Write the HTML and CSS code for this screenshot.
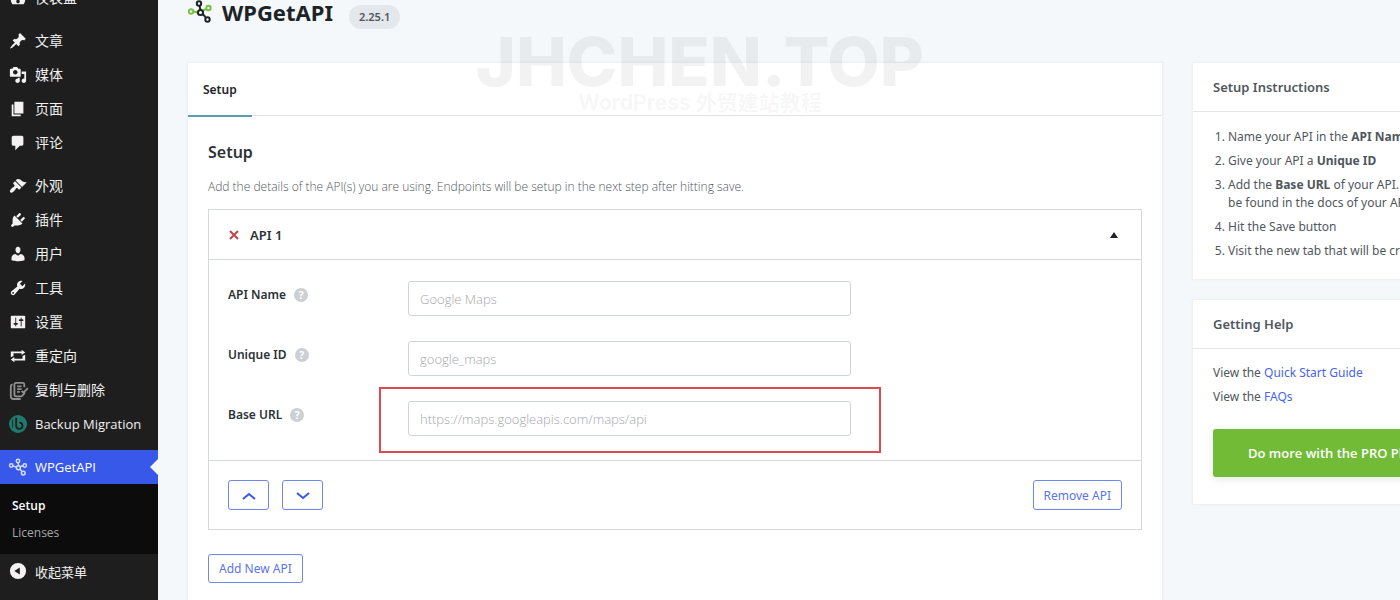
FILE: index.html
```html
<!DOCTYPE html>
<html lang="zh-CN">
<head>
    <meta charset="UTF-8">
    <meta name="viewport" content="width=device-width, initial-scale=1.0">
    <title>WPGetAPI</title>
    <link rel="stylesheet" href="styles.css">
</head>
<body>
    <div class="layout">
        <nav class="menu">
            <a class="menu-item" href="#">
                <svg class="menu-icon" viewBox="0 0 20 20"><path fill-rule="evenodd" d="M3.76 17h12.48A8 8 0 1 0 3.760 17zM10 12a2 2 0 1 1 0 4 2 2 0 0 1 0-4z"/></svg>
                <span>仪表盘</span>
            </a>
            <a class="menu-item group-start" href="#">
                <svg class="menu-icon" viewBox="0 0 20 20"><path d="M10.44 3.02l1.82-1.82 6.36 6.35-1.83 1.82c-1.05-.68-2.48-.57-3.41.36l-.75.75c-.92.93-1.04 2.35-.35 3.41l-1.83 1.82-2.41-2.41-2.8 2.79c-.42.42-3.38 2.71-3.8 2.29s1.86-3.39 2.28-3.81l2.79-2.79L4.1 9.36l1.83-1.82c1.05.69 2.48.57 3.4-.36l.75-.75c.93-.92 1.05-2.35.36-3.41z"/></svg>
                <span>文章</span>
            </a>
            <a class="menu-item" href="#">
                <svg class="menu-icon" viewBox="0 0 20 20"><path fill-rule="evenodd" d="M13 11V4c0-.55-.45-1-1-1h-1.67L9 1H5L3.67 3H2c-.55 0-1 .45-1 1v7c0 .55.45 1 1 1h10c.55 0 1-.45 1-1zM7 4.500c1.380 0 2.500 1.120 2.500 2.500S8.380 9.500 7 9.500 4.500 8.380 4.500 7 5.620 4.500 7 4.500zM14 6h5v10.500c0 1.380-1.120 2.500-2.500 2.500S14 17.880 14 16.500s1.120-2.500 2.500-2.500c.17 0 .34.02.5.05V9h-3V6zm-4 8.050V13h2v3.500c0 1.380-1.120 2.500-2.500 2.500S7 17.880 7 16.500 8.120 14 9.500 14c.17 0 .34.02.5.05z"/></svg>
                <span>媒体</span>
            </a>
            <a class="menu-item" href="#">
                <svg class="menu-icon" viewBox="0 0 20 20"><path d="M6 15V2h10v13H6zm-1 1h8v2H3V5h2v11z"/></svg>
                <span>页面</span>
            </a>
            <a class="menu-item" href="#">
                <svg class="menu-icon" viewBox="0 0 20 20"><path d="M5 2h9c1.100 0 2 .9 2 2v7c0 1.100-.9 2-2 2h-2l-5 5v-5H5c-1.100 0-2-.9-2-2V4c0-1.100.9-2 2-2z"/></svg>
                <span>评论</span>
            </a>
            <a class="menu-item group-start" href="#">
                <svg class="menu-icon" viewBox="0 0 20 20"><path d="M14.48 11.06L7.41 3.99l1.5-1.5c.5-.56 2.3-.47 3.51.32 1.21.8 1.43 1.28 2.91 2.1 1.18.64 2.45 1.26 4.45.85zm-.71.71L6.7 4.7 4.93 6.47c-.39.39-.39 1.02 0 1.41l1.06 1.06c.39.39.39 1.03 0 1.42-.6.6-1.43 1.11-2.21 1.69-.35.26-.7.53-1.01.84C1.43 14.23.4 16.08 1.4 17.07c.99 1 2.84-.03 4.18-1.36.31-.31.58-.66.85-1.02.57-.78 1.08-1.61 1.69-2.21.39-.39 1.02-.39 1.41 0l1.06 1.06c.39.39 1.02.39 1.41 0z"/></svg>
                <span>外观</span>
            </a>
            <a class="menu-item" href="#">
                <svg class="menu-icon" viewBox="0 0 20 20"><path d="M13.11 4.36L9.87 7.6 8 5.73l3.24-3.24c.35-.34 1.05-.2 1.56.32.52.51.66 1.21.31 1.55zm-8 1.77l.91-1.12 9.01 9.01-1.19.84c-.71.71-2.63 1.16-3.82 1.16H6.14L4.9 17.26c-.59.59-1.54.59-2.12 0-.59-.58-.59-1.53 0-2.12l1.24-1.24v-3.88c0-1.13.4-3.19 1.09-3.89zm7.26 3.97l3.24-3.24c.34-.35 1.04-.21 1.55.31.52.51.66 1.21.31 1.55l-3.24 3.25z"/></svg>
                <span>插件</span>
            </a>
            <a class="menu-item" href="#">
                <svg class="menu-icon" viewBox="0 0 20 20"><path d="M10 9.25c-2.27 0-2.73-3.44-2.73-3.44C7 4.02 7.82 2 9.97 2c2.16 0 2.98 2.02 2.71 3.81 0 0-.41 3.44-2.68 3.44zm0 2.57L12.72 10c2.39 0 4.52 2.33 4.52 4.53v2.49s-3.65 1.13-7.24 1.13c-3.65 0-7.24-1.13-7.24-1.13v-2.49c0-2.25 1.94-4.48 4.47-4.48z"/></svg>
                <span>用户</span>
            </a>
            <a class="menu-item" href="#">
                <svg class="menu-icon" viewBox="0 0 20 20"><path fill-rule="evenodd" d="M16.68 9.77c-1.34 1.34-3.3 1.67-4.95.99l-5.41 6.52c-.99.99-2.59.99-3.58 0s-.99-2.59 0-3.57l6.52-5.42c-.68-1.65-.35-3.61.99-4.95 1.28-1.28 3.12-1.62 4.72-1.06l-2.89 2.89 2.82 2.82 2.86-2.87c.53 1.58.18 3.39-1.08 4.65zM3.81 16.21c.4.39 1.04.39 1.43 0 .4-.4.4-1.04 0-1.43-.39-.4-1.03-.4-1.43 0-.39.39-.39 1.03 0 1.43z"/></svg>
                <span>工具</span>
            </a>
            <a class="menu-item" href="#">
                <svg class="menu-icon" viewBox="0 0 20 20"><path fill-rule="evenodd" d="M18 16V4c0-.55-.45-1-1-1H3c-.55 0-1 .45-1 1v12c0 .55.45 1 1 1h14c.55 0 1-.45 1-1zM8 11h1c.55 0 1 .45 1 1s-.45 1-1 1H8v1.5c0 .28-.22.5-.5.5s-.5-.22-.5-.5V13H6c-.55 0-1-.45-1-1s.45-1 1-1h1V5.5c0-.28.22-.5.5-.5s.5.22.5.5V11zm5-2h-1c-.55 0-1-.45-1-1s.45-1 1-1h1V5.5c0-.28.22-.5.5-.5s.5.22.5.5V7h1c.55 0 1 .45 1 1s-.45 1-1 1h-1v5.5c0 .28-.22.5-.5.5s-.5-.22-.5-.5V9z"/></svg>
                <span>设置</span>
            </a>
            <a class="menu-item" href="#">
                <svg class="menu-icon" viewBox="0 0 20 20"><path d="M5 7v3l-3 1.500V5h12V3l4 3.010L14 9V7H5zm10 6v-3l3-1.500V15H6v2l-4-3.010L6 11v2h9z"/></svg>
                <span>重定向</span>
            </a>
            <a class="menu-item" href="#">
                <svg class="menu-icon icon-copy" viewBox="0 0 20 20">
                    <path d="M17 12v2l-3 3H8a2 2 0 0 1-2-2V4a2 2 0 0 1 2-2h7a2 2 0 0 1 2 2v3"/>
                    <path d="M4 4a2 2 0 0 0-2 2v11a3 3 0 0 0 3 3h8M9 6h5M9 9h5M9 12h3M14 11l2 2 5-5"/>
                </svg>
                <span>复制与删除</span>
            </a>
            <a class="menu-item menu-latin" href="#">
                <svg class="menu-icon" viewBox="0 0 20 20">
                    <circle cx="10" cy="10" r="10" fill="#1f7a6c"/>
                    <path d="M8 3v9a3.500 3.500 0 1 0 3.500-3.500" fill="none" stroke="#1e1e1e" stroke-width="2"/>
                    <path d="M4 5v9" fill="none" stroke="#1e1e1e"/>
                </svg>
                <span>Backup Migration</span>
            </a>
            <a class="menu-item menu-latin group-start current" href="#">
                <svg class="menu-icon icon-nodes" viewBox="0 0 24 24">
                    <path d="M12 6.500l1 4M5.500 10.500l5 2M18.500 10l-4 2M14.500 15l3 3"/>
                    <circle cx="12" cy="4" r="2.300"/><circle cx="3" cy="10" r="2.300"/><circle cx="21" cy="10" r="2.300"/><circle cx="12.500" cy="13" r="2.600"/><circle cx="19" cy="20" r="2.500"/>
                </svg>
                <span>WPGetAPI</span>
            </a>
            <div class="submenu">
                <a class="active" href="#">Setup</a>
                <a href="#">Licenses</a>
            </div>
            <button class="menu-item collapse" type="button">
                <svg class="menu-icon" viewBox="0 0 20 20"><path fill-rule="evenodd" d="M10 1a9 9 0 1 1 0 18 9 9 0 0 1 0-18zM6 10l6-4v8z"/></svg>
                <span>收起菜单</span>
            </button>
        </nav>

        <main class="page">
            <header class="page-header">
                <svg class="logo" viewBox="0 0 24 24">
                    <g stroke="#7ac143"><path d="M5 11.500l5 1M18 9l-4 2"/><circle cx="3" cy="11.500" r="2.200"/><circle cx="20.500" cy="8" r="2.200"/></g>
                    <g stroke="#1d2327"><path d="M11.500 6l1 4M14.500 14l3 3"/><circle cx="11" cy="3.500" r="2.200"/><circle cx="12.500" cy="12.500" r="2.600"/><circle cx="19.500" cy="19.500" r="2.200"/></g>
                </svg>
                <h1>WPGetAPI</h1>
                <span class="version">2.25.1</span>
            </header>

            <div class="columns">
                <section class="card">
                    <div class="tabs">
                        <a class="tab" href="#">Setup</a>
                    </div>
                    <form class="form">
                        <h2>Setup</h2>
                        <p class="description">Add the details of the API(s) you are using. Endpoints will be setup in the next step after hitting save.</p>

                        <div class="group">
                            <div class="group-header">
                                <button class="remove-icon" type="button" aria-label="Remove">
                                    <svg viewBox="0 0 10 10"><path d="M1 1l8 8M9 1l-8 8"/></svg>
                                </button>
                                <h3>API 1</h3>
                                <svg class="toggle" viewBox="0 0 8 6"><path d="M4 0l4 6H0z"/></svg>
                            </div>
                            <div class="fields">
                                <div class="field">
                                    <label for="api-name">API Name <span class="help">?</span></label>
                                    <div class="control"><input id="api-name" type="text" placeholder="Google Maps"></div>
                                </div>
                                <div class="field">
                                    <label for="unique-id">Unique ID <span class="help">?</span></label>
                                    <div class="control"><input id="unique-id" type="text" placeholder="google_maps"></div>
                                </div>
                                <div class="field">
                                    <label for="base-url">Base URL <span class="help">?</span></label>
                                    <div class="control highlight"><input id="base-url" type="text" placeholder="https://maps.googleapis.com/maps/api"></div>
                                </div>
                            </div>
                            <div class="group-footer">
                                <button class="btn btn-move" type="button" aria-label="Move up"><svg viewBox="0 0 14 8"><path d="M1 7l6-5 6 5"/></svg></button>
                                <button class="btn btn-move" type="button" aria-label="Move down"><svg viewBox="0 0 14 8"><path d="M1 1l6 5 6-5"/></svg></button>
                                <button class="btn btn-remove" type="button">Remove API</button>
                            </div>
                        </div>

                        <button class="btn" type="button">Add New API</button>
                    </form>
                </section>

                <aside class="side">
                    <section class="card">
                        <h2>Setup Instructions</h2>
                        <ol>
                            <li>Name your API in the <b>API Name</b></li>
                            <li>Give your API a <b>Unique ID</b></li>
                            <li>Add the <b>Base URL</b> of your API. This can be found in the docs of your API</li>
                            <li>Hit the Save button</li>
                            <li>Visit the new tab that will be created</li>
                        </ol>
                    </section>
                    <section class="card">
                        <h2>Getting Help</h2>
                        <div class="help-links">
                            <p>View the <a href="#">Quick Start Guide</a></p>
                            <p>View the <a href="#">FAQs</a></p>
                            <a class="btn-pro" href="#">Do more with the PRO Plugin</a>
                        </div>
                    </section>
                </aside>
            </div>
        </main>

        <div class="watermark">
            <strong>JHCHEN.TOP</strong>
            <span>WordPress 外贸建站教程</span>
        </div>
    </div>
</body>
</html>
```

FILE: styles.css
```css
* {
    margin: 0;
    padding: 0;
    box-sizing: border-box;
}

body {
    font-family: "Noto Sans", "Noto Sans CJK SC", sans-serif;
    font-size: 12px;
    line-height: 18px;
    color: #50575e;
    background: #f4f8fb;
    overflow: hidden;
}

a {
    color: #4a64ea;
    text-decoration: none;
}

button,
input {
    font-family: inherit;
}

.layout {
    display: flex;
    position: relative;
    min-height: 100vh;
    overflow: hidden;
}

/* Admin menu */
.menu {
    flex: 0 0 158px;
    margin-top: -19px;
    background: #1e1e1e;
}

.menu-item {
    display: flex;
    align-items: center;
    gap: 8px;
    width: 100%;
    height: 34px;
    padding-left: 9px;
    border: none;
    background: none;
    color: #f0f0f1;
    font-family: "Open Sans", "Noto Sans CJK SC", sans-serif;
    font-size: 14px;
    white-space: nowrap;
}

.menu-latin,
.collapse {
    font-size: 13px;
}

.menu-icon {
    width: 18px;
    height: 18px;
    fill: #f3f1f1;
    overflow: visible;
}

.icon-copy {
    fill: none;
    stroke: #909090;
    stroke-width: 2;
}

.icon-nodes {
    fill: none;
    stroke: #d5dcfa;
    stroke-width: 2;
}

.group-start {
    margin-top: 9px;
}

.current {
    position: relative;
    background: #3858e9;
    color: white;
}

.current::after {
    content: "";
    position: absolute;
    top: 9px;
    right: 0;
    border: 8px solid transparent;
    border-left: none;
    border-right-color: #f4f8fb;
}

.submenu {
    padding: 8px 12px;
    background: #0c0c0c;
}

.submenu a {
    display: block;
    font-family: "Open Sans", sans-serif;
    font-size: 12px;
    line-height: 27px;
    color: #a7a7a7;
}

.submenu .active {
    color: white;
    font-weight: 600;
}

/* Page */
.page {
    flex: 1;
    min-width: 0;
    padding-left: 30px;
}

.page-header {
    display: flex;
    align-items: center;
    height: 24px;
    margin-bottom: 39px;
}

.logo {
    width: 24px;
    height: 24px;
    margin-right: 10px;
    fill: none;
    stroke-width: 2;
}

.page-header h1 {
    font-size: 22px;
    font-weight: 700;
    color: #1d2327;
}

.version {
    align-self: flex-start;
    margin: 5px 0 0 16px;
    padding: 0 10px;
    border-radius: 12px;
    background: #e4e8ec;
    font-size: 11px;
    font-weight: 600;
    line-height: 24px;
}

/* The side column runs past the right edge of the window */
.columns {
    display: grid;
    grid-template-columns: minmax(0, 1fr) 280px;
    gap: 31px;
    margin-right: -73px;
}

.card {
    background: white;
    box-shadow: 0 0 2px 1px #e9eef2;
}

.tabs {
    display: flex;
    height: 53px;
    border-bottom: 1px solid #dfe3e7;
}

.tab {
    height: 54px;
    padding: 0 15px;
    border-bottom: 2px solid #5b9cb5;
    font-weight: 600;
    line-height: 54px;
    color: #1d2327;
}

.form {
    padding: 26px 20px 20px;
}

.form h2 {
    font-size: 16px;
    font-weight: 600;
    line-height: 20px;
    color: #2c3338;
}

.description {
    margin: 16px 0 13px;
    font-family: "Open Sans", sans-serif;
    font-weight: 300;
}

.group {
    margin-bottom: 24px;
    border: 1px solid #d5d9dd;
}

.group-header {
    display: flex;
    align-items: center;
    gap: 11px;
    height: 50px;
    padding: 0 23px 0 20px;
    border-bottom: 1px solid #d5d9dd;
}

.group-header h3 {
    font-size: 13px;
    font-weight: 600;
    color: #2c3338;
}

.remove-icon {
    display: flex;
    border: none;
    background: none;
}

.remove-icon svg {
    width: 10px;
    height: 10px;
    stroke: #c0444b;
    stroke-width: 2;
}

.toggle {
    width: 8px;
    height: 6px;
    margin-left: auto;
    fill: #1d2327;
}

.fields {
    display: grid;
    gap: 25px;
    padding: 21px 19px 24px;
}

.field {
    display: grid;
    grid-template-columns: 180px minmax(0, 1fr);
}

.field label {
    display: flex;
    align-items: center;
    gap: 8px;
    height: 28px;
    font-weight: 600;
    color: #2c3338;
}

.help {
    width: 14px;
    height: 14px;
    border-radius: 50%;
    background: #ccd0d4;
    color: white;
    font-size: 11px;
    font-weight: 700;
    line-height: 14px;
    text-align: center;
}

.control {
    position: relative;
    width: 62%;
}

.control input {
    display: block;
    width: 100%;
    height: 35px;
    padding: 0 11px;
    border: 1px solid #d0d5da;
    border-radius: 3px;
    background: white;
    font-family: "Open Sans", sans-serif;
    font-size: 13px;
    font-weight: 300;
}

.control input::placeholder {
    color: #a5a8ab;
}

.highlight::after {
    content: "";
    position: absolute;
    inset: -14px -30px -17px -29px;
    border: 2px solid #dc4a50;
    pointer-events: none;
}

.group-footer {
    display: flex;
    gap: 13px;
    padding: 19px;
    border-top: 1px solid #d5d9dd;
}

.btn {
    height: 29px;
    padding: 0 10px;
    border: 1px solid #6f86ee;
    border-radius: 3px;
    background: white;
    color: #5b74eb;
    font-size: 12px;
}

.group-footer .btn {
    height: 30px;
}

.btn-move {
    width: 41px;
}

.btn-move svg {
    width: 14px;
    height: 8px;
    fill: none;
    stroke: #3858e9;
    stroke-width: 2;
}

.btn-remove {
    margin-left: auto;
}

/* Side column */
.side {
    display: grid;
    align-content: start;
    gap: 21px;
}

.side h2 {
    padding: 0 20px;
    border-bottom: 1px solid #e3e6e9;
    font-size: 13px;
    font-weight: 600;
    line-height: 48px;
    color: #50575e;
}

.side ol {
    display: grid;
    gap: 6px;
    padding: 16px 20px 19px 35px;
}

.help-links {
    display: grid;
    gap: 6px;
    padding: 15px 20px 27px;
}

.btn-pro {
    margin-top: 17px;
    padding: 0 35px;
    border-radius: 3px;
    background: #72bb36;
    box-shadow: 0 2px 8px rgba(0, 0, 0, 0.1);
    color: white;
    font-family: "Open Sans", sans-serif;
    font-size: 13px;
    font-weight: 600;
    line-height: 48px;
    white-space: nowrap;
}

/* Watermark over the page */
.watermark {
    position: absolute;
    top: 25px;
    left: 0;
    right: 0;
    display: flex;
    flex-direction: column;
    align-items: center;
    color: rgba(0, 0, 0, 0.05);
    font-family: Inter, "Noto Sans CJK SC", sans-serif;
    pointer-events: none;
}

.watermark strong {
    font-size: 68px;
    font-weight: 800;
    line-height: 72px;
}

.watermark span {
    font-size: 21px;
    font-weight: 700;
    line-height: 12px;
}
```
